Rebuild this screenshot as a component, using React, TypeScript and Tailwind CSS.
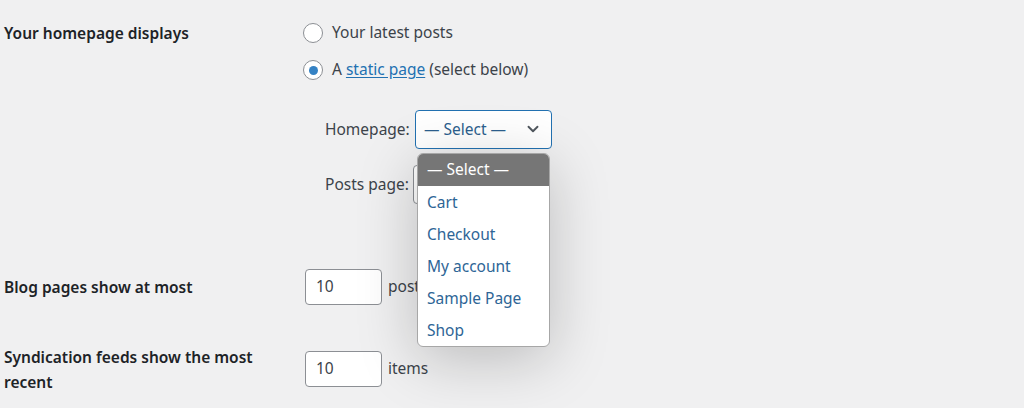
import { ChevronDown } from 'lucide-react';

const options = ['Cart', 'Checkout', 'My account', 'Sample Page', 'Shop'];

const Radio = ({ checked }: { checked?: boolean }) => (
  <span className="flex h-5 w-5 shrink-0 items-center justify-center rounded-full border border-[#8c8f94] bg-white">
    {checked && <span className="h-[9px] w-[9px] rounded-full bg-[#3582c4]" />}
  </span>
);

export default function App() {
  return (
    <div
      className="h-[408px] w-[1024px] overflow-hidden bg-[#f0f0f1] text-[15.5px] text-[#3c434a]"
      style={{ fontFamily: '"Noto Sans", "Open Sans", sans-serif' }}
    >
      {/* Homepage displays */}
      <div className="flex pt-[21px]">
        <div className="w-[301px] pl-1 pt-px font-semibold text-[#1d2327]">Your homepage displays</div>
        <div className="flex flex-col">
          <label className="flex h-6 items-center gap-[9px] pl-[2px]">
            <Radio />
            <span>Your latest posts</span>
          </label>
          <label className="mt-[13px] flex h-6 items-center gap-[9px] pl-[2px]">
            <Radio checked />
            <span>
              A <a className="text-[#2271b1] underline underline-offset-2">static page</a> (select below)
            </span>
          </label>

          {/* Page selects */}
          <div className="mt-[28px] flex flex-col gap-[16px] pl-6">
            <div className="flex items-center gap-[4px]">
              <span className="w-[86px]">Homepage:</span>
              <div className="relative">
                <div className="flex h-[39px] w-[137px] items-center justify-between rounded-[4px] border-[1.5px] border-[#2271b1] bg-white pb-px pl-2 pr-[9px] text-[#2c5f8e]">
                  <span className="pt-[2px]">— Select —</span>
                  <ChevronDown className="h-[18px] w-[18px] text-[#50575e]" strokeWidth={2.5} />
                </div>
                {/* Open option list */}
                <div className="absolute left-[2px] top-[43px] z-10 w-[133px] overflow-hidden rounded-[6px] border border-[#a7a7a7] bg-white shadow-[0_12px_60px_rgba(0,0,0,0.22)]">
                  <div className="flex h-8 items-center bg-[#767676] px-[9px] text-white">— Select —</div>
                  {options.map((o) => (
                    <div key={o} className="flex h-8 items-center px-[9px] pt-px text-[#2e6596]">
                      {o}
                    </div>
                  ))}
                </div>
              </div>
            </div>
            <div className="flex items-center gap-[4px]">
              <span className="w-[84px]">Posts page:</span>
              <div className="h-[39px] w-[137px] rounded-[4px] border border-[#8c8f94] bg-white" />
            </div>
          </div>
        </div>
      </div>

      {/* Blog pages show at most */}
      <div className="mt-[65px] flex items-center">
        <div className="w-[305px] pl-1 pt-[2px] font-semibold text-[#1d2327]">Blog pages show at most</div>
        <div className="flex items-center gap-[6px]">
          <div className="flex h-[36px] w-[77px] items-center rounded-[4px] border border-[#8c8f94] bg-white px-[10px]">10</div>
          <span>posts</span>
        </div>
      </div>

      {/* Syndication feeds */}
      <div className="mt-[40px] flex items-start">
        <div className="w-[305px] pl-1 font-semibold leading-[25px] text-[#1d2327]">
          Syndication feeds show the most
          <br />
          recent
        </div>
        <div className="mt-[6px] flex items-center gap-[6px]">
          <div className="flex h-[36px] w-[77px] items-center rounded-[4px] border border-[#8c8f94] bg-white px-[10px]">10</div>
          <span>items</span>
        </div>
      </div>
    </div>
  );
}
